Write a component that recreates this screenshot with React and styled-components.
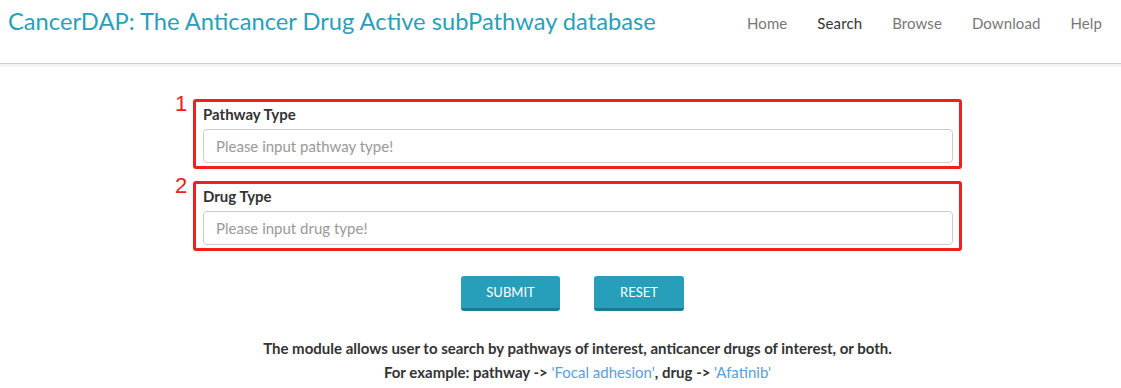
import styled, { createGlobalStyle } from "styled-components";

const Global = createGlobalStyle`
  body {
    margin: 0;
    background: #fff;
    font-family: Lato, "Open Sans", sans-serif;
    color: #333;
  }
`;

const Header = styled.div`
  display: flex;
  justify-content: space-between;
  align-items: flex-start;
  height: 63px;
  padding: 0 4px 0 8px;
  border-bottom: 1px solid #cfcfcf;
  box-shadow: 0 3px 0 #f4f4f4;
`;

const Title = styled.div`
  font-size: 23.7px;
  color: #2a9fb9;
  line-height: 42px;
`;

const Nav = styled.div`
  display: flex;
  padding-top: 12px;
`;

const NavItem = styled.a`
  padding: 0 15px;
  font-size: 15px;
  line-height: 22px;
  letter-spacing: 0.1px;
  color: ${(p) => (p.active ? "#333" : "#777")};
`;

const Main = styled.div`
  width: 769px;
  margin-left: 193px;
  padding-top: 35px;
`;

const Field = styled.div`
  position: relative;
  border: 3px solid #f0201c;
  border-radius: 3px;
  padding: 2px 6px 3px 7px;
  margin-bottom: 12px;
`;

const Num = styled.span`
  position: absolute;
  left: -21px;
  top: -11px;
  font-family: "Liberation Sans", Arial, sans-serif;
  font-size: 22px;
  color: #f0201c;
`;

const Label = styled.div`
  font-size: 15px;
  font-weight: 700;
  color: #333;
  line-height: 21px;
  margin-bottom: 4px;
`;

const Input = styled.input`
  box-sizing: border-box;
  display: block;
  width: 100%;
  height: 34px;
  border: 1px solid #ccc;
  border-radius: 4px;
  padding: 0 12px;
  font-family: Lato, "Open Sans", sans-serif;
  font-size: 15px;
  color: #555;
  &::placeholder {
    color: #999;
  }
`;

const Buttons = styled.div`
  display: flex;
  justify-content: center;
  gap: 34px;
  margin-top: 25px;
  padding-right: 10px;
`;

const Button = styled.button`
  width: ${(p) => p.w}px;
  height: 35px;
  border: none;
  border-bottom: 3px solid #1c7b8f;
  border-radius: 3px;
  background: #279fba;
  color: #fff;
  font-family: Lato, "Open Sans", sans-serif;
  font-size: 13px;
  text-transform: uppercase;
`;

const Note = styled.p`
  margin: 25px 0 0;
  text-align: center;
  font-size: 15px;
  font-weight: 700;
  line-height: 24px;
  color: #333;
`;

const Link = styled.a`
  color: #5d9dd8;
  font-weight: 400;
`;

export default function App() {
  return (
    <>
      <Global />
      <Header>
        <Title>CancerDAP: The Anticancer Drug Active subPathway database</Title>
        <Nav>
          <NavItem>Home</NavItem>
          <NavItem active>Search</NavItem>
          <NavItem>Browse</NavItem>
          <NavItem>Download</NavItem>
          <NavItem>Help</NavItem>
        </Nav>
      </Header>
      <Main>
        <Field>
          <Num>1</Num>
          <Label>Pathway Type</Label>
          <Input placeholder="Please input pathway type!" />
        </Field>
        <Field>
          <Num>2</Num>
          <Label>Drug Type</Label>
          <Input placeholder="Please input drug type!" />
        </Field>
        <Buttons>
          <Button w={99}>Submit</Button>
          <Button w={90}>Reset</Button>
        </Buttons>
        <Note>
          The module allows user to search by pathways of interest, anticancer drugs of interest, or both.
          <br />
          For example: pathway -&gt; <Link>'Focal adhesion'</Link>, drug -&gt; <Link>'Afatinib'</Link>
        </Note>
      </Main>
    </>
  );
}
